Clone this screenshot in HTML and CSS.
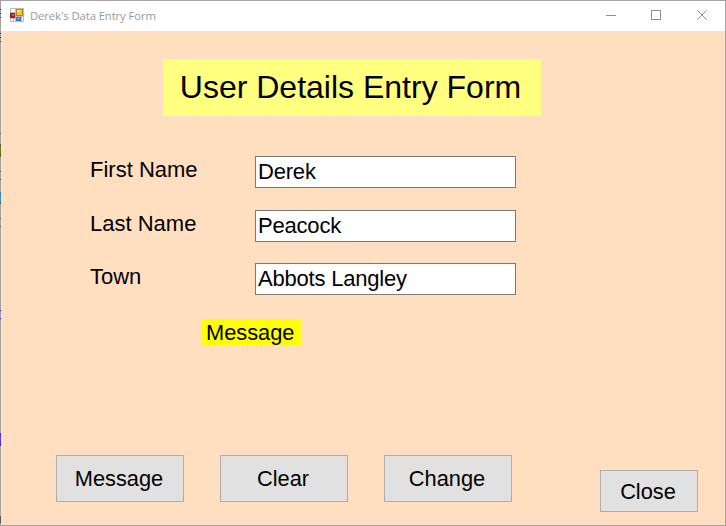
FILE: index.html
```html
<!DOCTYPE html>
<html lang="en">
<head>
<meta charset="utf-8">
<title>Derek's Data Entry Form</title>
<link rel="stylesheet" href="styles.css">
</head>
<body>
<div class="window">
  <header class="titlebar">
    <svg class="app-icon" width="14" height="14" viewBox="0 0 14 14" shape-rendering="crispEdges">
      <path fill="#b9bcc2" d="M0 0h14v14H0z"/>
      <path fill="#fff" d="M1 1h4v3H1zM1 11h2v2H1zM4 11h1v2H4zM12 9h1v4h-1z"/>
      <path fill="#a31e17" d="M0 5h5v5H0z"/>
      <path fill="#dc5a45" d="M2 6h2v2H2z"/>
      <path fill="#b8860e" d="M6 1h7v7H6z"/>
      <path fill="#f8c52e" d="M7 2h5v5H7z"/>
      <path fill="#ffe98c" d="M7 2h3v2H7z"/>
      <path fill="#3f74d2" d="M6 9h5v4H6z"/>
      <path fill="#83b0f3" d="M7 10h3v1H7z"/>
    </svg>
    <span class="caption">Derek's Data Entry Form</span>
    <svg class="controls" width="104" height="12" viewBox="0 0 104 12" fill="none" stroke="#8f8f8f">
      <path d="M0 6.5h10M45.5 1.5h9v9h-9z" shape-rendering="crispEdges"/>
      <path d="M91.3 1.3l9.4 9.4M100.7 1.3l-9.4 9.4"/>
    </svg>
  </header>
  <main class="form">
    <h1 class="heading">User Details Entry Form</h1>
    <div class="fields">
      <label class="label" for="first">First Name</label>
      <input class="input" id="first" value="Derek">
      <label class="label" for="last">Last Name</label>
      <input class="input" id="last" value="Peacock">
      <label class="label" for="town">Town</label>
      <input class="input town" id="town" value="Abbots Langley">
    </div>
    <div class="message">Message</div>
    <div class="actions">
      <button class="button">Message</button>
      <button class="button">Clear</button>
      <button class="button">Change</button>
      <button class="button close">Close</button>
    </div>
  </main>
</div>
</body>
</html>
```
FILE: styles.css
```css
* { box-sizing: border-box; }
body { margin: 0; font-family: "Liberation Sans", Arial, sans-serif; color: #000; }
.window {
  width: 726px;
  height: 526px;
  display: flex;
  flex-direction: column;
  overflow: hidden;
  padding: 1px;
  background:
    linear-gradient(#333, #333) 0 9px / 1px 1px no-repeat,
    linear-gradient(#333, #333) 0 13px / 1px 1px no-repeat,
    linear-gradient(#333, #333) 0 17px / 1px 1px no-repeat,
    linear-gradient(#333, #333) 0 33px / 1px 1px no-repeat,
    linear-gradient(#333, #333) 0 37px / 1px 1px no-repeat,
    linear-gradient(#333, #333) 0 41px / 1px 1px no-repeat,
    linear-gradient(#666, #666) 0 133px / 1px 1px no-repeat,
    linear-gradient(#386b2b, #8a7010 40%, #386b2b) 0 144px / 1px 13px no-repeat,
    linear-gradient(#386b2b, #386b2b) 0 171px / 1px 1px no-repeat,
    linear-gradient(#386b2b, #386b2b) 0 179px / 1px 1px no-repeat,
    linear-gradient(#3a7fae, #3a94b8 70%, #386b2b) 0 192px / 1px 12px no-repeat,
    linear-gradient(#666, #666) 0 218px / 1px 1px no-repeat,
    linear-gradient(#666, #666) 0 226px / 1px 1px no-repeat,
    linear-gradient(#3920e8, #3920e8) 0 310px / 1px 1px no-repeat,
    linear-gradient(#3920e8, #3920e8) 0 318px / 1px 1px no-repeat,
    linear-gradient(#3920e8, #7a3fc0 40%, #3920e8) 0 433px / 1px 13px no-repeat,
    linear-gradient(#555, #555) 0 516px / 1px 7px no-repeat,
    #a3a3a6;
}
.titlebar {
  height: 30px;
  flex: none;
  display: flex;
  align-items: center;
  padding: 0 15px 0 9px;
  background: #fff;
}
.app-icon { margin: 0 6px 2px 0; }
.caption {
  font: 11.3px/30px "Open Sans", sans-serif;
  letter-spacing: -0.1px;
  color: #999;
  white-space: nowrap;
}
.controls { margin: 0 0 2px auto; }
.form {
  flex: 1;
  display: flex;
  flex-direction: column;
  align-items: flex-start;
  padding: 28px 27px 13px 55px;
  background: #ffdfc0;
}
.heading {
  width: 378px;
  height: 57px;
  margin: 0 0 40px 107px;
  padding-right: 3px;
  font-size: 32px;
  font-weight: 400;
  line-height: 57px;
  text-align: center;
  white-space: nowrap;
  background: #ffff80;
}
.fields {
  display: grid;
  grid-template-columns: 165px 261px;
  grid-template-rows: 32px 32px 32px;
  row-gap: 21.5px;
  margin-left: 34px;
  font-size: 22px;
}
.label { line-height: 28px; }
.input {
  width: 261px;
  height: 32px;
  padding: 0 2px;
  border: 1px solid #7a7a7a;
  border-radius: 0;
  background: #fff;
  font: inherit;
  letter-spacing: -0.2px;
  color: #000;
}
.message {
  width: 100px;
  height: 26px;
  margin: 24px 0 0 145px;
  padding-left: 5px;
  font-size: 21.8px;
  line-height: 27px;
  background: #ff0;
}
.actions {
  align-self: stretch;
  display: flex;
  align-items: flex-start;
  gap: 36px;
  margin-top: auto;
  height: 57px;
}
.button {
  width: 128px;
  height: 47px;
  padding: 0 2px 0 0;
  border: 1px solid #adadad;
  border-radius: 0;
  background: #e1e1e1;
  font: 21.8px "Liberation Sans", Arial, sans-serif;
  color: #000;
}
.close {
  width: 98px;
  height: 42px;
  padding-top: 2px;
  margin-left: auto;
  align-self: flex-end;
}
```
